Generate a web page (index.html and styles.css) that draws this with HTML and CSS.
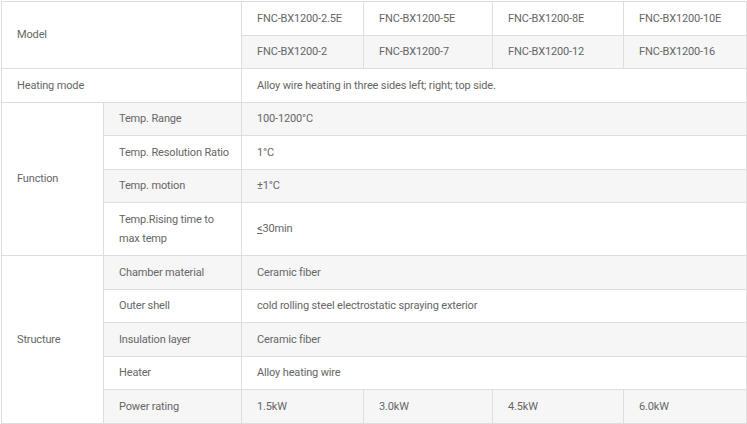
FILE: index.html
```html
<!DOCTYPE html>
<html>
<head>
<meta charset="utf-8">
<link rel="stylesheet" href="styles.css">
</head>
<body>
<table class="spec">
  <colgroup>
    <col class="c1"><col class="c2"><col class="c3"><col class="c4"><col class="c5"><col class="c6">
  </colgroup>
  <tbody>
    <tr>
      <td colspan="2" rowspan="2">Model</td>
      <td>FNC-BX1200-2.5E</td>
      <td>FNC-BX1200-5E</td>
      <td>FNC-BX1200-8E</td>
      <td>FNC-BX1200-10E</td>
    </tr>
    <tr class="alt">
      <td>FNC-BX1200-2</td>
      <td>FNC-BX1200-7</td>
      <td>FNC-BX1200-12</td>
      <td>FNC-BX1200-16</td>
    </tr>
    <tr>
      <td colspan="2">Heating mode</td>
      <td colspan="4">Alloy wire heating in three sides left; right; top side.</td>
    </tr>
    <tr class="alt">
      <td rowspan="4" class="group">Function</td>
      <td>Temp. Range</td>
      <td colspan="4">100-1200°C</td>
    </tr>
    <tr>
      <td>Temp. Resolution Ratio</td>
      <td colspan="4">1°C</td>
    </tr>
    <tr class="alt">
      <td>Temp. motion</td>
      <td colspan="4">±1°C</td>
    </tr>
    <tr>
      <td>Temp.Rising time to max temp</td>
      <td colspan="4"><u>&lt;</u>30min</td>
    </tr>
    <tr class="alt">
      <td rowspan="5" class="group">Structure</td>
      <td>Chamber material</td>
      <td colspan="4">Ceramic fiber</td>
    </tr>
    <tr>
      <td>Outer shell</td>
      <td colspan="4">cold rolling steel electrostatic spraying exterior</td>
    </tr>
    <tr class="alt">
      <td>Insulation layer</td>
      <td colspan="4">Ceramic fiber</td>
    </tr>
    <tr>
      <td>Heater</td>
      <td colspan="4">Alloy heating wire</td>
    </tr>
    <tr class="alt">
      <td>Power rating</td>
      <td>1.5kW</td>
      <td>3.0kW</td>
      <td>4.5kW</td>
      <td>6.0kW</td>
    </tr>
  </tbody>
</table>
</body>
</html>
```

FILE: styles.css
```css
html, body {
  margin: 0;
  padding: 0;
  background: #fff;
}
body {
  padding: 1px 0 0 1px;
}
.spec {
  border-collapse: collapse;
  table-layout: fixed;
  width: 745px;
  font-family: Roboto, "Liberation Sans", sans-serif;
  font-size: 11px;
  letter-spacing: -0.15px;
  line-height: 19.5px;
  color: #666;
}
.c1 { width: 102px; }
.c2 { width: 138px; }
.c3 { width: 122px; }
.c4 { width: 129px; }
.c5 { width: 131px; }
.c6 { width: 123px; }
.spec td {
  border: 1px solid #dedede;
  padding: 6.5px 10px 6.5px 15px;
  text-align: left;
  vertical-align: middle;
}
.spec tr.alt td {
  background: #f6f6f6;
}
.spec tr.alt td.group {
  background: #fff;
}
.spec u {
  text-decoration: underline;
  text-underline-offset: 1px;
}
```
